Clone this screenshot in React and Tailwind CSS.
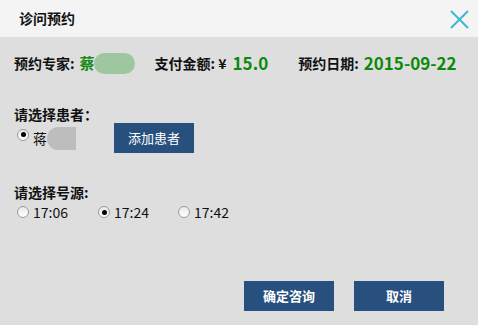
export default function App() {
  const font = { fontFamily: '"Microsoft YaHei", "Noto Sans CJK SC", "Noto Sans", sans-serif' };
  const Radio = ({ checked, className = "" }) => (
    <span className={"inline-flex w-[12px] h-[12px] rounded-full border border-[#9a9a9a] bg-gradient-to-b from-[#e9e9e9] to-white items-center justify-center mr-[4px] " + className}>
      {checked && <span className="w-[5px] h-[5px] rounded-full bg-black" />}
    </span>
  );
  return (
    <div className="w-[478px] h-[325px] bg-[#dedede] flex flex-col text-[#111]" style={font}>
      <div className="h-[37px] bg-[#f4f4f4] flex items-center justify-between pl-[19px] pr-[9px]">
        <span className="text-[14px] font-bold">诊问预约</span>
        <svg width="19" height="19" viewBox="0 0 19 19" className="mt-[1px]">
          <path d="M1 1 L18 18 M18 1 L1 18" stroke="#3db9d3" strokeWidth="2" />
        </svg>
      </div>
      <div className="flex items-center h-[22px] mt-[15px] pl-[14px] text-[14px] font-bold">
        <span>预约专家:</span>
        <span className="ml-[5px] text-[15px] text-[#1a8a1a]">蔡</span>
        <span className="w-[41px] h-[21px] rounded-full bg-[#9fc79f] -ml-[1px]" />
        <span className="ml-[20px]">支付金额: ¥</span>
        <span className="ml-[6px] text-[17px] text-[#0b8a0b]">15.0</span>
        <span className="ml-[30px]">预约日期:</span>
        <span className="ml-[5px] text-[17px] text-[#0b8a0b]">2015-09-22</span>
      </div>
      <div className="mt-[31px] pl-[14px] text-[14px] font-bold h-[18px] flex items-center">请选择患者：</div>
      <div className="flex items-center pl-[17px] h-[30px]">
        <Radio checked className="mb-[7px]" />
        <span className="text-[14px]">蒋</span>
        <span className="w-[29px] h-[23px] rounded-l-full bg-[#bdbdbd]" />
        <button className="ml-[38px] w-[80px] h-[30px] bg-[#28507f] text-white text-[13px]" style={font}>添加患者</button>
      </div>
      <div className="mt-[30px] pl-[14px] text-[14px] font-bold h-[18px] flex items-center">请选择号源:</div>
      <div className="flex items-center pl-[17px] h-[20px] mt-[1px] text-[14px]">
        <span className="flex items-center w-[81px]"><Radio /><span>17:06</span></span>
        <span className="flex items-center w-[80px]"><Radio checked /><span>17:24</span></span>
        <span className="flex items-center"><Radio /><span>17:42</span></span>
      </div>
      <div className="flex justify-end gap-[20px] pr-[34px] mt-[59px]">
        <button className="w-[90px] h-[30px] bg-[#28507f] text-white text-[13px] font-bold" style={font}>确定咨询</button>
        <button className="w-[90px] h-[30px] bg-[#28507f] text-white text-[13px] font-bold" style={font}>取消</button>
      </div>
    </div>
  );
}
